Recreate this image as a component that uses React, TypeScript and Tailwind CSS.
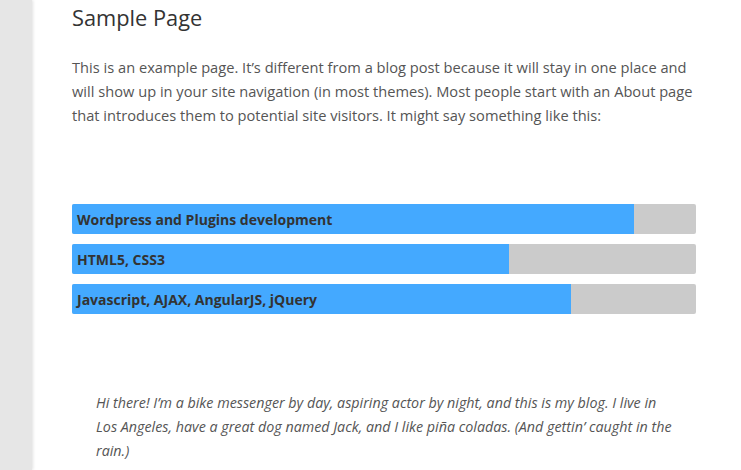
const skills = [
  { label: "Wordpress and Plugins development", value: 90 },
  { label: "HTML5, CSS3", value: 70 },
  { label: "Javascript, AJAX, AngularJS, jQuery", value: 80 },
];

const SkillBar = ({ label, value }: { label: string; value: number }) => (
  <div className="relative h-[30px] rounded-[2px] bg-[#cbcbcb] overflow-hidden">
    <div className="h-full bg-[#44a9ff]" style={{ width: `${value}%` }} />
    <span className="absolute inset-y-0 left-[5px] flex items-center text-[14px] font-bold text-[#333]">
      {label}
    </span>
  </div>
);

export default function App() {
  return (
    <div className="flex h-[470px] w-[741px] overflow-hidden bg-white font-['Open_Sans',sans-serif]">
      <div className="w-[32px] shrink-0 bg-[#e6e6e6] shadow-[1px_0_3px_rgba(0,0,0,0.12)]" />
      <main className="w-[624px] shrink-0 pl-[40px] box-content">
        <h1 className="mt-[3px] text-[21.8px] leading-[30px] font-normal text-[#333]">Sample Page</h1>
        <p className="mt-[22px] text-[14.65px] leading-[24px] text-[#555]">
          This is an example page. It’s different from a blog post because it will stay in one place and will show up in
          your site navigation (in most themes). Most people start with an About page that introduces them to potential
          site visitors. It might say something like this:
        </p>
        <div className="mt-[77px] flex flex-col gap-[10px]">
          {skills.map((s) => (
            <SkillBar key={s.label} {...s} />
          ))}
        </div>
        <blockquote className="mt-[77px] pl-[24px] pr-[16px] text-[14.3px] leading-[24px] italic text-[#555]">
          Hi there! I’m a bike messenger by day, aspiring actor by night, and this is my blog. I live in Los Angeles, have a
          great dog named Jack, and I like piña coladas. (And gettin’ caught in the rain.)
        </blockquote>
      </main>
    </div>
  );
}
